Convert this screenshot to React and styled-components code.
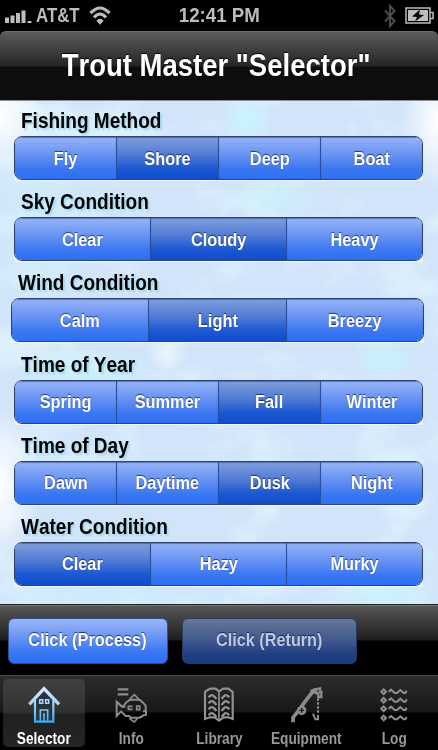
import styled, { createGlobalStyle } from 'styled-components'

const GlobalStyle = createGlobalStyle`
  * {
    box-sizing: border-box;
  }

  body {
    margin: 0;
    background: #000;
    font-family: 'Liberation Sans', Arial, sans-serif;
    font-weight: 700;
  }

  button {
    font: inherit;
    border: 0;
    padding: 0;
  }

  svg {
    display: block;
  }
`

const Screen = styled.div`
  width: 438px;
  height: 750px;
  display: flex;
  flex-direction: column;
  overflow: hidden;
`

// Narrow lettering used for every text on the screen
const Text = styled.span`
  display: block;
  white-space: nowrap;
  transform: scaleX(${({ $scale }) => $scale || 0.876});
  transform-origin: ${({ $origin }) => $origin || 'center'};
`

const StatusBar = styled.header`
  height: 31px;
  display: grid;
  grid-template-columns: 1fr auto 1fr;
  align-items: center;
  padding: 0 4px 0 5px;
  color: #bdbdbd;
  font-size: 20px;
  line-height: 31px;
`

const StatusLeft = styled.div`
  display: flex;
  align-items: center;
  gap: 4px;
`

const Carrier = styled.div`
  width: 49px;
`

const StatusRight = styled.div`
  display: flex;
  align-items: center;
  justify-content: flex-end;
  gap: 9px;
`

const NavBar = styled.div`
  height: 69px;
  display: flex;
  justify-content: center;
  padding-right: 5px;
  border-radius: 6px 6px 0 0;
  border-top: 1px solid #6e6e6e;
  background: linear-gradient(#5c5c5c, #242424 34px, #0e0e0e 35px, #0d0d0d);
`

const Title = styled.h1`
  margin: 0;
  color: #fff;
  font-size: 31px;
  font-kerning: none;
  line-height: 68px;
  text-shadow: 0 -1px 1px #000;
`

const Content = styled.main`
  position: relative;
  height: 504px;
  overflow: hidden;
  border-top: 1px solid #8b8f98;
  background: #d2e4fa;
`

const Water = styled.svg`
  position: absolute;
  inset: 0;
`

const Form = styled.div`
  position: relative;
  margin-top: -1px;
  padding-right: 15px;
`

const Group = styled.section`
  height: 81.2px;
  padding-left: ${({ $wide }) => ($wide ? '11px' : '14px')};
  margin-right: ${({ $wide }) => ($wide ? '-1px' : '0')};
`

const Label = styled.h2`
  margin: 0;
  height: 36px;
  padding-left: 7px;
  color: #000;
  font-size: 21.5px;
  font-kerning: none;
  line-height: 43px;
  text-shadow: 2px 2px 2px #a0d8ea;
`

const Segments = styled.div`
  height: 44px;
  display: flex;
  border: 1px solid #2c4374;
  border-radius: 8px;
  overflow: hidden;
`

const SegmentsEdge = styled.div`
  background: #eef6ff;
  border-radius: 8px 8px 2px 2px;
  padding-bottom: 1px;
`

const Segment = styled.button`
  flex: 1;
  min-width: 0;
  display: flex;
  align-items: center;
  justify-content: center;
  color: #fff;
  font-size: 18.7px;
  line-height: 24px;
  padding: 1px 0 0;
  text-shadow: 0 -1px 1px rgba(10, 30, 80, 0.75);
  box-shadow: inset 0 1px 1px rgba(30, 55, 120, 0.5);
  background: ${({ $selected }) =>
    $selected
      ? 'linear-gradient(#829fdd, #4d78d4 45%, #1c58d2 75%, #0f4dcc)'
      : 'linear-gradient(#96b4f8, #6590f2 45%, #3b78f1 75%, #2d6ff2)'};

  & + & {
    border-left: 1px solid #2950a0;
  }
`

const Toolbar = styled.div`
  height: 71px;
  display: flex;
  gap: 14px;
  padding: 13px 8px 0;
  border-top: 1px solid #222;
  box-shadow: inset 0 1px #747474;
  background: linear-gradient(#585858, #1d1d1d 35px, #000 36px, #000);
`

const ActionButton = styled.button`
  width: ${({ $width }) => $width}px;
  height: 46px;
  display: flex;
  align-items: center;
  justify-content: center;
  border: 1px solid ${({ disabled }) => (disabled ? '#263a66' : '#304f91')};
  border-radius: 6px;
  font-size: 18.7px;
  padding-bottom: 2px;
  color: ${({ disabled }) => (disabled ? '#bdc9e0' : '#fff')};
  text-shadow: 0 -1px 1px rgba(10, 25, 70, 0.8);
  background: ${({ disabled }) =>
    disabled
      ? 'linear-gradient(#677796, #3f578d 50%, #203f80 80%, #1b3b80)'
      : 'linear-gradient(#9ab6f8, #6b95f4 40%, #3978f2 75%, #2d6ff2)'};
`

const TabBar = styled.nav`
  height: 75px;
  display: flex;
  padding: 3px 0 3px;
  border-top: 1px solid #4a4a4a;
  background: linear-gradient(#2d2d2d, #171717 36px, #000 37px, #000);
`

const Tab = styled.button`
  flex: 1;
  display: flex;
  flex-direction: column;
  align-items: center;
  justify-content: space-between;
  margin: 0 3px;
  padding: 7px 0 0;
  border-radius: 5px;
  font-size: 15.6px;
  line-height: 16px;
  color: ${({ $active }) => ($active ? '#fff' : '#989898')};
  background: ${({ $active }) =>
    $active ? 'linear-gradient(#404040, #303030 34px, #202020 35px, #252525)' : 'none'};
`

const IconSlot = styled.div`
  height: 40px;
  display: flex;
  align-items: flex-start;
`

function SignalIcon() {
  return (
    <svg width="27" height="16" viewBox="0 0 27 16" fill="#bdbdbd">
      <path d="M0 9.500h4V15H0zM5.500 7.500h4V15h-4zM11 5h4v10h-4zM16.500 2.500h4V15h-4zM22.500 13h4v2h-4z" />
    </svg>
  )
}

function WifiIcon() {
  return (
    <svg width="22" height="19" viewBox="0 0 22 19" fill="none" stroke="#bdbdbd">
      <path d="M1.500 7.200Q11-3.200 20.500 7.200" strokeWidth="3.200" />
      <path d="M5 11.500Q11 4.500 17 11.500" strokeWidth="3.200" />
      <path d="M11 18.800L7.300 14.800Q11 10.800 14.700 14.800Z" fill="#bdbdbd" stroke="none" />
    </svg>
  )
}

function BluetoothIcon() {
  return (
    <svg width="12" height="24" viewBox="0 0 12 24" fill="none" stroke="#4c4c4c" strokeWidth="2">
      <path d="M1 6.500L10.500 17 6 22V2l4.500 5L1 17.500" />
    </svg>
  )
}

function BatteryIcon() {
  return (
    <svg width="29" height="17" viewBox="0 0 29 17">
      <path d="M1 1h24v15H1z" fill="none" stroke="#bdbdbd" strokeWidth="1.500" />
      <path d="M3 3h20v11H3z" fill="#bdbdbd" />
      <path d="M25.500 5.500H28v6h-2.500" fill="none" stroke="#bdbdbd" strokeWidth="1.500" />
      <path d="M15 2.500L7 9.500l5 .5-2 4.500 9-6.500-5-.5z" fill="#050505" />
    </svg>
  )
}

function HouseIcon() {
  return (
    <svg width="32" height="38" viewBox="84 38 96 114" fill="none" stroke="url(#house)">
      <defs>
        <linearGradient id="house" gradientUnits="userSpaceOnUse" x1="0" y1="40" x2="0" y2="148">
          <stop offset="0" stopColor="#dceaff" />
          <stop offset="0.500" stopColor="#a5d2f8" />
          <stop offset="1" stopColor="#39a8ec" />
        </linearGradient>
      </defs>
      <path d="M105 80l27-30 28 30v66h-55z" fill="#27333d" stroke="none" />
      <path d="M88 93L132 46l45 47" strokeWidth="10" />
      <path d="M105 80v65h55V80" strokeWidth="6.500" />
      <path d="M119 79h9v11h-9zM137 79h9v11h-9z" strokeWidth="4.500" />
      <path d="M121 145v-35h22v35M132 120v24" strokeWidth="5" />
    </svg>
  )
}

function FishIcon() {
  return (
    <svg width="32" height="38" viewBox="346 34 96 114" fill="none" stroke="#8c8c8c" strokeWidth="6">
      <path d="M354 44h32M354 59h32" strokeWidth="7" />
      <path d="M351 81v43l13-14 14 14h10l7 5h25l12-7 7-1v-11h-9 8V93l-8-9-10-9h-27l-12 7-12 15z" />
      <path d="M351 81l13 14 14 2M388 76l7-7 9-9 9 9 6 8M389 130l8 7 7 5 9-10" strokeWidth="5" />
      <path d="M399 95h-13v9h13M411 94h9v11h-9z" strokeWidth="5" />
    </svg>
  )
}

function BookIcon() {
  return (
    <svg width="32" height="38" viewBox="129 36 96 114" fill="none" stroke="#929292" strokeWidth="6.500">
      <path d="M177 52l-10-8h-16l-8 4-8 6v81l14-5h15l13 10 14-10h14l13 5V54l-13-10h-15z" />
      <path d="M177 51v83" strokeWidth="5" />
      <path
        d="M146 70q5-9 12-6t11 11M146 88q5-9 12-6t11 11M146 106q5-9 12-6t11 11M146 124q5-9 12-6t11 11M185 75q4-8 10-11t13 6M185 93q4-8 10-11t13 6M185 111q4-8 10-11t13 6M185 129q4-8 10-11t13 6"
        strokeWidth="7"
      />
    </svg>
  )
}

function RodIcon() {
  return (
    <svg width="32" height="38" viewBox="392 36 96 114" fill="none" stroke="#8c8c8c">
      <path d="M398 145v-14l16-20 20-28 21-27 14-10" strokeWidth="11" />
      <path d="M450 52q12-8 29-9v10h4v16h-9v-12h-11" strokeWidth="7" />
      <circle cx="424" cy="109" r="14" fill="#8c8c8c" stroke="none" />
      <path d="M424 102v14M417 109h14" stroke="#111" strokeWidth="4" />
      <path d="M473 73v44" strokeWidth="6" strokeDasharray="7 5" />
      <path d="M473 122v14h-8l-7-17" strokeWidth="6" />
    </svg>
  )
}

function LogIcon() {
  return (
    <svg width="28" height="38" viewBox="660 36 84 114" fill="none" stroke="#8f8f8f" strokeWidth="6">
      {[53, 79, 104, 132].map(y => (
        <path key={y} d={`M671 ${y - 7}l7 7-7 7-7-7zM686 ${y}l7-6 11 10h7l10-9 10 9h5l4-7`} />
      ))}
    </svg>
  )
}

function WaterBackground() {
  return (
    <Water width="438" height="504">
      <defs>
        <filter id="ripple" x="0" y="0" width="100%" height="100%">
          <feTurbulence type="fractalNoise" baseFrequency="0.014 0.018" numOctaves="5" seed="8" />
          <feColorMatrix values="0 0 0 0 0.79  0 0 0 0 0.97  0 0 0 0 1  4 0 0 0 -1.9" />
        </filter>
        <radialGradient id="glow">
          <stop offset="0" stopColor="#fff" />
          <stop offset="1" stopColor="#fff" stopOpacity="0" />
        </radialGradient>
        <radialGradient id="cyan">
          <stop offset="0" stopColor="#c8f6fd" />
          <stop offset="1" stopColor="#c8f6fd" stopOpacity="0" />
        </radialGradient>
      </defs>
      <rect width="438" height="504" filter="url(#ripple)" opacity="0.5" />
      <ellipse cx="247" cy="18" rx="28" ry="28" fill="url(#cyan)" />
      <ellipse cx="275" cy="97" rx="50" ry="22" fill="url(#cyan)" opacity="0.7" />
      <ellipse cx="384" cy="258" rx="34" ry="24" fill="url(#cyan)" opacity="0.9" />
      <ellipse cx="85" cy="270" rx="80" ry="26" fill="url(#cyan)" opacity="0.7" />
      <ellipse cx="40" cy="120" rx="70" ry="120" fill="url(#cyan)" opacity="0.4" />
      <ellipse cx="385" cy="495" rx="60" ry="25" fill="url(#cyan)" opacity="0.8" />
      <ellipse cx="120" cy="500" rx="150" ry="25" fill="url(#cyan)" opacity="0.6" />
      <ellipse cx="0" cy="15" rx="50" ry="65" fill="url(#glow)" />
      <ellipse cx="0" cy="384" rx="40" ry="80" fill="url(#glow)" />
      <ellipse cx="438" cy="20" rx="38" ry="70" fill="url(#glow)" />
      <ellipse cx="168" cy="253" rx="22" ry="18" fill="url(#glow)" opacity="0.5" />
    </Water>
  )
}

const groups = [
  { label: 'Fishing Method', options: ['Fly', 'Shore', 'Deep', 'Boat'], selected: 'Shore' },
  { label: 'Sky Condition', options: ['Clear', 'Cloudy', 'Heavy'], selected: 'Cloudy' },
  { label: 'Wind Condition', options: ['Calm', 'Light', 'Breezy'], selected: 'Light', wide: true },
  { label: 'Time of Year', options: ['Spring', 'Summer', 'Fall', 'Winter'], selected: 'Fall' },
  { label: 'Time of Day', options: ['Dawn', 'Daytime', 'Dusk', 'Night'], selected: 'Dusk' },
  { label: 'Water Condition', options: ['Clear', 'Hazy', 'Murky'], selected: 'Clear' },
]

const tabs = [
  { name: 'Selector', Icon: HouseIcon },
  { name: 'Info', Icon: FishIcon },
  { name: 'Library', Icon: BookIcon },
  { name: 'Equipment', Icon: RodIcon },
  { name: 'Log', Icon: LogIcon },
]

function App() {
  return (
    <Screen>
      <GlobalStyle />

      <StatusBar>
        <StatusLeft>
          <SignalIcon />
          <Carrier>
            <Text $origin="left" $scale={0.84}>
              AT&amp;T
            </Text>
          </Carrier>
          <WifiIcon />
        </StatusLeft>
        <Text $scale={0.935}>12:41 PM</Text>
        <StatusRight>
          <BluetoothIcon />
          <BatteryIcon />
        </StatusRight>
      </StatusBar>

      <NavBar>
        <Title>
          <Text $scale={0.887}>Trout Master "Selector"</Text>
        </Title>
      </NavBar>

      <Content>
        <WaterBackground />
        <Form>
          {groups.map(({ label, options, selected, wide }) => (
            <Group key={label} $wide={wide}>
              <Label>
                <Text $origin="left" $scale={0.884}>
                  {label}
                </Text>
              </Label>
              <SegmentsEdge>
                <Segments>
                  {options.map(option => (
                    <Segment key={option} $selected={option === selected}>
                      <Text>{option}</Text>
                    </Segment>
                  ))}
                </Segments>
              </SegmentsEdge>
            </Group>
          ))}
        </Form>
      </Content>

      <Toolbar>
        <ActionButton $width={160}>
          <Text>Click (Process)</Text>
        </ActionButton>
        <ActionButton $width={175} disabled>
          <Text $scale={0.868}>Click (Return)</Text>
        </ActionButton>
      </Toolbar>

      <TabBar>
        {tabs.map(({ name, Icon }, i) => (
          <Tab key={name} $active={i === 0}>
            <IconSlot>
              <Icon />
            </IconSlot>
            <Text>{name}</Text>
          </Tab>
        ))}
      </TabBar>
    </Screen>
  )
}

export default App
